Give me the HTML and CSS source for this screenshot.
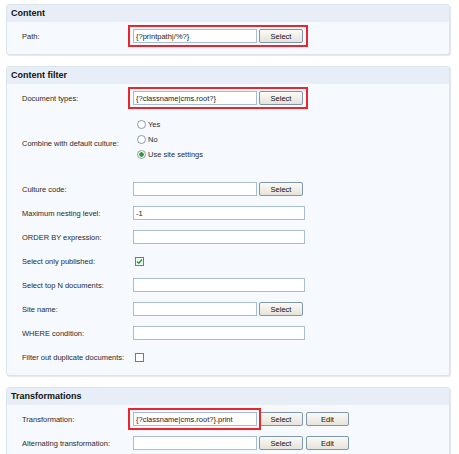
FILE: index.html
```html
<!DOCTYPE html>
<html>
<head>
  <title>Web part properties</title>
  <link rel="stylesheet" href="styles.css">
</head>
<body>

<div class="panel first">
  <div class="head">Content</div>
  <div class="body">
    <div class="row">
      <div class="label">Path:</div>
      <div class="field mark">
        <input class="txt short" type="text" value="{?printpath|/%?}">
        <button>Select</button>
      </div>
    </div>
  </div>
</div>

<div class="panel">
  <div class="head">Content filter</div>
  <div class="body">
    <div class="row">
      <div class="label">Document types:</div>
      <div class="field mark">
        <input class="txt short" type="text" value="{?classname|cms.root?}">
        <button>Select</button>
      </div>
    </div>
    <div class="row tall">
      <div class="label">Combine with default culture:</div>
      <div class="field radios">
        <label><input class="rb" type="radio" name="comb"> Yes</label>
        <label><input class="rb" type="radio" name="comb"> No</label>
        <label><input class="rb" type="radio" name="comb" checked> Use site settings</label>
      </div>
    </div>
    <div class="row">
      <div class="label">Culture code:</div>
      <div class="field"><input class="txt short" type="text"><button>Select</button></div>
    </div>
    <div class="row">
      <div class="label">Maximum nesting level:</div>
      <div class="field"><input class="txt long" type="text" value="-1"></div>
    </div>
    <div class="row">
      <div class="label">ORDER BY expression:</div>
      <div class="field"><input class="txt long" type="text"></div>
    </div>
    <div class="row">
      <div class="label">Select only published:</div>
      <div class="field"><input class="cb" type="checkbox" checked></div>
    </div>
    <div class="row">
      <div class="label">Select top N documents:</div>
      <div class="field"><input class="txt long" type="text"></div>
    </div>
    <div class="row">
      <div class="label">Site name:</div>
      <div class="field"><input class="txt short" type="text"><button>Select</button></div>
    </div>
    <div class="row">
      <div class="label">WHERE condition:</div>
      <div class="field"><input class="txt long" type="text"></div>
    </div>
    <div class="row">
      <div class="label">Filter out duplicate documents:</div>
      <div class="field"><input class="cb" type="checkbox"></div>
    </div>
  </div>
</div>

<div class="panel">
  <div class="head">Transformations</div>
  <div class="body">
    <div class="row">
      <div class="label">Transformation:</div>
      <div class="field">
        <span class="ring"><input class="txt short" type="text" value="{?classname|cms.root?}.print"></span>
        <button>Select</button><button class="edit">Edit</button>
      </div>
    </div>
    <div class="row">
      <div class="label">Alternating transformation:</div>
      <div class="field"><input class="txt short" type="text"><button>Select</button><button class="edit">Edit</button></div>
    </div>
  </div>
</div>

</body>
</html>
```

FILE: styles.css
```css
body { margin: 0; padding: 0 0 20px 6px; background: #fff; font-family: "Liberation Sans", Arial, sans-serif; font-size: 7.5px; color: #2a2a2a; }
.panel { width: 442px; margin-top: 11px; border: 1px solid #dde3ea; border-radius: 3px; box-shadow: 1px 1px 1px #e3e6ea; background: #f6f9fd; overflow: hidden; }
.panel.first { margin-top: 4px; }
.head { height: 17px; line-height: 17px; padding-left: 4px; background: #e7eef7; font-size: 9px; font-weight: bold; color: #111; }
.body { padding: 2px 0 6px; }
.row { display: flex; align-items: center; height: 24px; }
.row.tall { height: 67px; }
.label { width: 111px; padding-left: 15px; flex: none; }
.field { display: flex; align-items: center; }
.mark { border: 2px solid #e8262b; padding: 2px 3px; margin-left: -5px; }
.ring { position: relative; display: flex; }
.ring::after { content: ""; position: absolute; left: -5px; right: -4px; top: -4px; bottom: -4px; border: 2px solid #e8262b; }
.txt { box-sizing: border-box; height: 14px; margin: 0; padding: 0 2px; border: 1px solid #a9bdd2; background: #fff; font: inherit; color: #222; outline: none; }
.txt.short { width: 124px; }
.txt.long { width: 172px; }
button { box-sizing: border-box; width: 44px; height: 14px; margin: 0 0 0 2px; padding: 0; border: 1px solid #7e96ae; border-radius: 2px; background: linear-gradient(#fbfaf6, #e6e3da); font: inherit; color: #111; }
button.edit { width: 43px; margin-left: 3px; }
.radios { flex-direction: column; align-items: flex-start; margin-top: -8px; margin-left: 4px; }
.radios label { display: flex; align-items: center; height: 15px; }
.rb { appearance: none; box-sizing: border-box; width: 9px; height: 9px; margin: 0 2px 0 0; border: 1px solid #8c9aa8; border-radius: 50%; background: #fff; }
.rb:checked { background: radial-gradient(circle, #2d9a2d 0 2px, #fff 2.5px); }
.cb { appearance: none; box-sizing: border-box; width: 9px; height: 9px; margin: 0 0 0 2px; border: 1px solid #5f7fa0; background: #fff; }
.cb:checked { background: #f2f7fb url("data:image/svg+xml,%3Csvg xmlns='http://www.w3.org/2000/svg' viewBox='0 0 7 7'%3E%3Cpath d='M1 3.5l1.8 1.8L6 1.5' fill='none' stroke='%2321a321' stroke-width='1.4'/%3E%3C/svg%3E") center/7px no-repeat; }
```
